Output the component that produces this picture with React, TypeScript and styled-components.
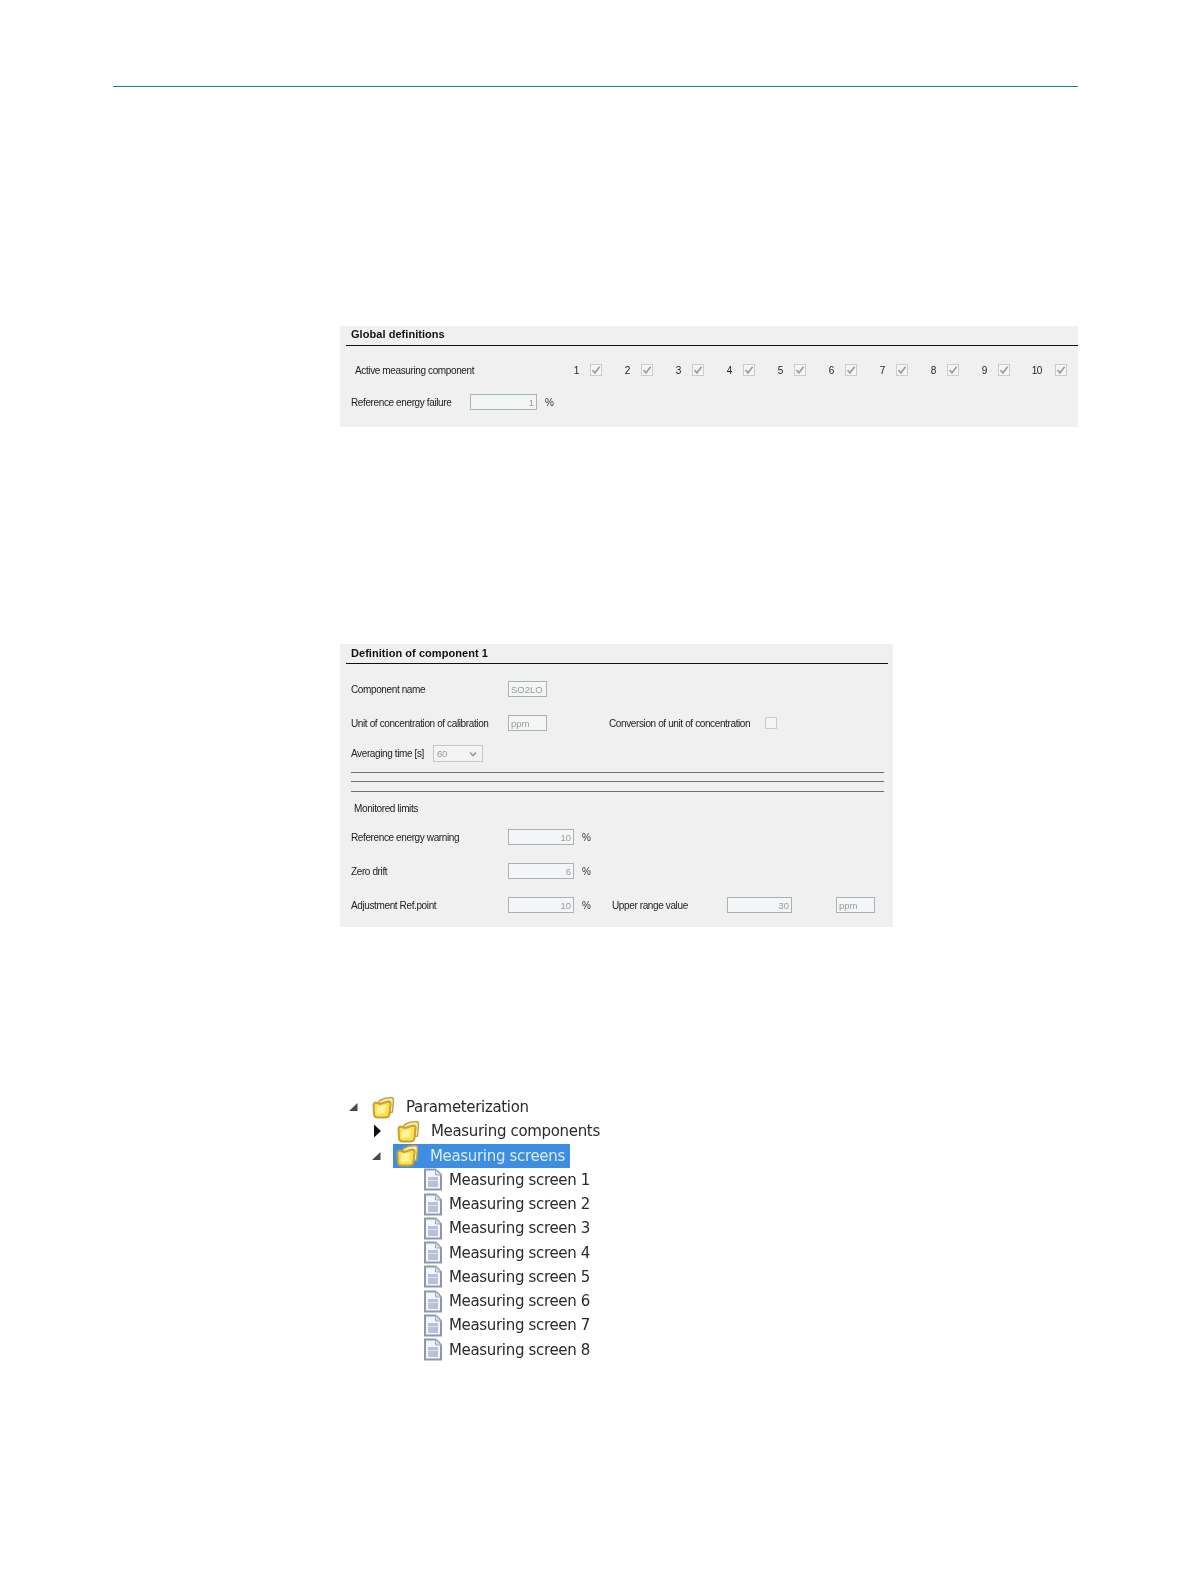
import { createGlobalStyle, styled } from "styled-components";

const GlobalStyle = createGlobalStyle`
    html, body {
        margin: 0;
        padding: 0;
        background: #ffffff;
    }
`;

const Page = styled.div`
    width: 1191px;
    height: 1584px;
    overflow: hidden;
    font-family: "Liberation Sans", Arial, sans-serif;
`;

const HeaderRule = styled.div`
    margin: 86px 113px 0 113px;
    height: 1px;
    background: #17809f;
`;

const Content = styled.div`
    margin-left: 340px;
`;

const Panel = styled.section<{ $width: number; $top: number; $bottom: number }>`
    width: ${(p) => p.$width}px;
    margin-top: ${(p) => p.$top}px;
    padding-bottom: ${(p) => p.$bottom}px;
    background: #f0f0f0;
    color: #222;
    font-size: 10px;
    letter-spacing: -0.38px;
    filter: blur(0.4px);
`;

const PanelTitle = styled.h3<{ $inset: number; $line?: number }>`
    margin: 0 ${(p) => p.$inset}px 0 6px;
    padding-left: 5px;
    height: 19px;
    line-height: ${(p) => p.$line ?? 18}px;
    font-size: 11px;
    font-weight: bold;
    letter-spacing: 0.05px;
    color: #111;
    border-bottom: 1px solid #111;
`;

const Row = styled.div<{ $top: number; $height?: number; $left?: number }>`
    display: flex;
    align-items: center;
    height: ${(p) => p.$height ?? 16}px;
    margin-top: ${(p) => p.$top}px;
    padding-left: ${(p) => p.$left ?? 11}px;
`;

const Label = styled.span<{ $width: number }>`
    flex: none;
    width: ${(p) => p.$width}px;
    white-space: nowrap;
`;

const Field = styled.div<{ $width: number; $align?: string }>`
    flex: none;
    box-sizing: border-box;
    width: ${(p) => p.$width}px;
    height: 16px;
    padding: 0 2px;
    line-height: 16px;
    font-size: 9.5px;
    letter-spacing: 0;
    text-align: ${(p) => p.$align ?? "left"};
    color: #9a9a9a;
    background: #f3f6f6;
    border: 1px solid #aab2b6;
`;

const Unit = styled.span<{ $width: number }>`
    flex: none;
    width: ${(p) => p.$width}px;
    padding-left: 8px;
    box-sizing: border-box;
    color: #333;
`;

const Spacer = styled.span<{ $width: number }>`
    flex: none;
    width: ${(p) => p.$width}px;
`;

const Pair = styled.div<{ $wide?: boolean }>`
    flex: none;
    display: flex;
    align-items: center;
    justify-content: flex-end;
    gap: ${(p) => (p.$wide ? 13 : 11)}px;
    width: ${(p) => (p.$wide ? 57 : 51)}px;
`;

const Box = styled.span`
    flex: none;
    display: inline-flex;
    align-items: center;
    justify-content: center;
    box-sizing: border-box;
    width: 12px;
    height: 12px;
    background: #f5f5f5;
    border: 1px solid #cccccc;
`;

const SelectBox = styled.div`
    flex: none;
    display: flex;
    align-items: center;
    justify-content: space-between;
    box-sizing: border-box;
    width: 50px;
    height: 17px;
    padding: 0 5px 0 3px;
    font-size: 9.5px;
    color: #9a9a9a;
    background: #f3f3f3;
    border: 1px solid #c4c8ca;
`;

const Divider = styled.hr<{ $top: number }>`
    margin: ${(p) => p.$top}px 9px 0 11px;
    height: 1px;
    border: 0;
    background: #6e6e6e;
`;

const Tree = styled.div`
    margin-top: 168px;
    font-family: "DejaVu Sans", sans-serif;
    font-size: 15px;
    letter-spacing: -0.33px;
    color: #2a2a2a;
    filter: blur(0.55px);
`;

const TreeRow = styled.div<{ $indent: number }>`
    display: flex;
    align-items: center;
    height: 24.25px;
    margin-left: ${(p) => p.$indent}px;
`;

const ArrowCell = styled.span<{ $width: number }>`
    flex: none;
    display: flex;
    align-items: center;
    width: ${(p) => p.$width}px;
`;

const NodeLabel = styled.span<{ $gap: number }>`
    display: flex;
    align-items: center;
    gap: ${(p) => p.$gap}px;
    white-space: nowrap;
`;

const SelectedNode = styled(NodeLabel)`
    box-sizing: border-box;
    width: 177px;
    height: 24px;
    padding-left: 3px;
    background: #3d8ee0;
    color: #dcecff;
`;

function Check() {
    return (
        <svg width="10" height="10" viewBox="0 0 10 10">
            <path d="M1.5 5.2 L4 7.8 L8.6 1.8" fill="none" stroke="#a0a0a0" strokeWidth="1.8" />
        </svg>
    );
}

function Chevron() {
    return (
        <svg width="8" height="6" viewBox="0 0 8 6">
            <path d="M1 1.5 L4 4.5 L7 1.5" fill="none" stroke="#9a9a9a" strokeWidth="1.6" />
        </svg>
    );
}

function OpenArrow() {
    return (
        <svg width="10" height="10" viewBox="0 0 10 10">
            <path d="M9.5 1 L9.5 9 L1 9 Z" fill="#4a4a4a" />
        </svg>
    );
}

function ClosedArrow() {
    return (
        <svg width="9" height="14" viewBox="0 0 9 14">
            <path d="M1 0.5 L8 7 L1 13.5 Z" fill="#111" />
        </svg>
    );
}

function Folder() {
    return (
        <svg width="23" height="23" viewBox="0 0 23 23" style={{ flex: "none" }}>
            <path d="M7 5 L12 2.5 L19 1.5 Q21.5 1.5 21.5 4 L20.5 16 L8 18 Z" fill="#f8edb4" stroke="#c4a548" strokeWidth="1.5" />
            <path d="M1.5 9 Q1.5 6.5 4 6.5 L8 8 L16 5.5 Q19 5.5 18.5 8.5 L17.5 18 Q17 21.5 13 21.5 L6 21.5 Q2 21.5 2 18 Z" fill="#fbe24f" stroke="#c9a232" strokeWidth="2" />
            <path d="M5 10.5 L14 9 L13 17 L5 18 Z" fill="#fff3a2" />
        </svg>
    );
}

function Doc() {
    return (
        <svg width="20" height="23" viewBox="0 0 20 23" style={{ flex: "none" }}>
            <path d="M2 1.5 L12.5 1.5 L18 7 L18 21.5 L2 21.5 Z" fill="#f4f6fb" stroke="#8f97ab" strokeWidth="2" />
            <path d="M12.5 1.5 L12.5 7 L18 7 Z" fill="#d8dde9" stroke="#a2aabc" strokeWidth="1" />
            <rect x="5" y="9" width="10" height="10" fill="#b9c0da" />
            <path d="M5 12.5 H15" stroke="#dadfed" strokeWidth="1" />
        </svg>
    );
}

const componentNumbers = [1, 2, 3, 4, 5, 6, 7, 8, 9, 10];
const screens = [1, 2, 3, 4, 5, 6, 7, 8];

export default function App() {
    return (
        <Page>
            <GlobalStyle />
            <HeaderRule />
            <Content>
                <Panel $width={738} $top={239} $bottom={17}>
                    <PanelTitle $inset={0} $line={16}>Global definitions</PanelTitle>
                    <Row $top={16} $left={15}>
                        <Label $width={196}>Active measuring component</Label>
                        {componentNumbers.map((n) => (
                            <Pair key={n} $wide={n === 10}>
                                {n}
                                <Box>
                                    <Check />
                                </Box>
                            </Pair>
                        ))}
                    </Row>
                    <Row $top={16}>
                        <Label $width={119}>Reference energy failure</Label>
                        <Field $width={67} $align="right">1</Field>
                        <Unit $width={30}>%</Unit>
                    </Row>
                </Panel>

                <Panel $width={553} $top={217} $bottom={14}>
                    <PanelTitle $inset={5}>Definition of component 1</PanelTitle>
                    <Row $top={17}>
                        <Label $width={157}>Component name</Label>
                        <Field $width={39}>SO2LO</Field>
                    </Row>
                    <Row $top={18}>
                        <Label $width={157}>Unit of concentration of calibration</Label>
                        <Field $width={39}>ppm</Field>
                        <Spacer $width={62} />
                        <Label $width={156}>Conversion of unit of concentration</Label>
                        <Box />
                    </Row>
                    <Row $top={14} $height={17}>
                        <Label $width={82}>Averaging time [s]</Label>
                        <SelectBox>
                            60
                            <Chevron />
                        </SelectBox>
                    </Row>
                    <Divider $top={10} />
                    <Divider $top={8} />
                    <Divider $top={9} />
                    <Row $top={9} $height={14} $left={14}>
                        <Label $width={100}>Monitored limits</Label>
                    </Row>
                    <Row $top={14}>
                        <Label $width={157}>Reference energy warning</Label>
                        <Field $width={66} $align="right">10</Field>
                        <Unit $width={38}>%</Unit>
                    </Row>
                    <Row $top={18}>
                        <Label $width={157}>Zero drift</Label>
                        <Field $width={66} $align="right">6</Field>
                        <Unit $width={38}>%</Unit>
                    </Row>
                    <Row $top={18}>
                        <Label $width={157}>Adjustment Ref.point</Label>
                        <Field $width={66} $align="right">10</Field>
                        <Unit $width={38}>%</Unit>
                        <Label $width={115}>Upper range value</Label>
                        <Field $width={65} $align="right">30</Field>
                        <Spacer $width={44} />
                        <Field $width={39}>ppm</Field>
                    </Row>
                </Panel>

                <Tree>
                    <TreeRow $indent={8}>
                        <ArrowCell $width={24}>
                            <OpenArrow />
                        </ArrowCell>
                        <NodeLabel $gap={11}>
                            <Folder />
                            Parameterization
                        </NodeLabel>
                    </TreeRow>
                    <TreeRow $indent={33}>
                        <ArrowCell $width={24}>
                            <ClosedArrow />
                        </ArrowCell>
                        <NodeLabel $gap={11}>
                            <Folder />
                            Measuring components
                        </NodeLabel>
                    </TreeRow>
                    <TreeRow $indent={31}>
                        <ArrowCell $width={22}>
                            <OpenArrow />
                        </ArrowCell>
                        <SelectedNode $gap={11}>
                            <Folder />
                            Measuring screens
                        </SelectedNode>
                    </TreeRow>
                    {screens.map((n) => (
                        <TreeRow key={n} $indent={83}>
                            <NodeLabel $gap={6}>
                                <Doc />
                                Measuring screen {n}
                            </NodeLabel>
                        </TreeRow>
                    ))}
                </Tree>
            </Content>
        </Page>
    );
}
